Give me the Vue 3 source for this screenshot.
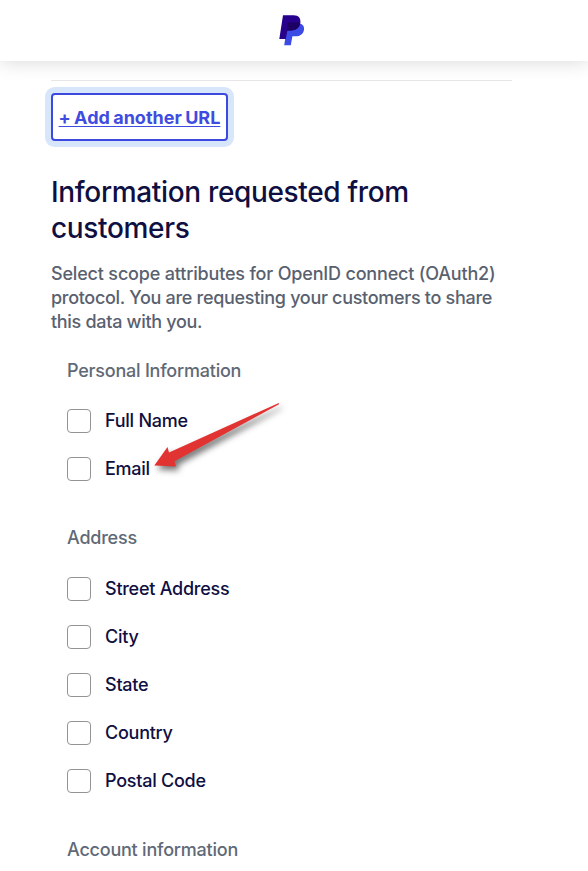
<template>
  <div class="page">
    <header class="top-bar">
      <svg class="logo" viewBox="0 0 26 31" role="img" aria-label="PayPal">
        <path d="M8.6 8.5H20.4C24 9 25.7 11.8 24.9 15.2C24 19.4 20.8 21.3 16.7 21.3H13.4L11.8 30.2H5.2Z" fill="#3b4be4" />
        <path d="M4 0.3H14.5C19.8 0.3 22.3 3.7 21.2 8.6C20.1 13.5 16.6 15.4 12 15.4H8.3L6.8 24H0.3Z" fill="#27008c" />
        <path d="M8.7 7.4H21.2C20.7 12.6 17 15.4 12 15.4H8.2L7.2 21Z" fill="#1c0064" />
      </svg>
    </header>

    <main class="content">
      <button class="add-url" type="button"><span>+ Add another URL</span></button>

      <h2 class="title">Information requested from<br />customers</h2>
      <p class="description">
        <span class="line-one">Select scope attributes for OpenID connect (OAuth2)</span><br />
        <span>protocol. You are requesting your customers to share</span><br />
        <span>this data with you.</span>
      </p>

      <section v-for="group in groups" :key="group.title" class="group">
        <h3 class="group-title">{{ group.title }}</h3>
        <label v-for="item in group.items" :key="item" class="option">
          <input v-model="selected" type="checkbox" class="checkbox" :value="item" />
          <span>{{ item }}</span>
        </label>
      </section>
    </main>

    <!-- arrow pointing at the email option -->
    <svg class="arrow" viewBox="0 0 150 90" aria-hidden="true">
      <path d="M14.3 75.5L27.5 57L29 62.5L138.8 13L139 14.2L34.5 71.2L36 76.5Z" fill="#e23333" />
    </svg>
  </div>
</template>

<script setup>
import { ref } from 'vue'

const selected = ref([])

const groups = [
  { title: 'Personal Information', items: ['Full Name', 'Email'] },
  { title: 'Address', items: ['Street Address', 'City', 'State', 'Country', 'Postal Code'] },
  { title: 'Account information', items: [] }
]
</script>

<style>
body {
  margin: 0;
  background: #fff;
}
</style>

<style scoped>
.page {
  position: relative;
  height: 871px;
  overflow: hidden;
  background: #fff;
  color: #0f0f42;
  font-family: Inter, "Liberation Sans", sans-serif;
  font-size: 18px;
  line-height: 24px;
}

.top-bar {
  display: flex;
  justify-content: center;
  box-sizing: border-box;
  height: 61px;
  padding: 15px 0 0 0;
  background: #fff;
  box-shadow: 0 0 20px rgba(0, 0, 0, 0.17);
}

.logo {
  width: 26px;
  height: 31px;
  margin-right: 4px;
}

.content {
  width: 461px;
  margin: 19px 0 0 51px;
  border-top: 1px solid #e6e6e6;
}

.add-url {
  display: flex;
  align-items: center;
  justify-content: center;
  box-sizing: border-box;
  width: 177px;
  height: 48px;
  margin: 12px 0 0;
  padding: 1px 0 0;
  border: 2px solid #3b49df;
  border-radius: 4px;
  background: #fff;
  box-shadow: 0 0 0 6px #d7e6fb;
  color: #3f4ce0;
  font-family: inherit;
  font-size: 18px;
  font-weight: 650;
  line-height: 24px;
  letter-spacing: 0.02px;
  word-spacing: -1px;
  white-space: nowrap;
}

.add-url span {
  text-decoration: underline;
  text-decoration-thickness: 1px;
  text-underline-offset: 2px;
  text-decoration-skip-ink: none;
}

.title {
  margin: 33px 0 0;
  font-size: 28px;
  font-weight: 500;
  line-height: 36px;
  letter-spacing: -0.34px;
  white-space: nowrap;
}

.description {
  margin: 16px 0 0;
  color: #59616f;
  font-weight: 450;
  letter-spacing: -0.3px;
  white-space: nowrap;
}

.line-one {
  letter-spacing: -0.18px;
}

.group {
  margin: 25px 0 0 16px;
}

.group + .group {
  margin-top: 33px;
}

.group-title {
  margin: 0 0 14px;
  color: #606976;
  font-size: 18px;
  font-weight: 450;
  line-height: 24px;
  letter-spacing: -0.22px;
}

.group + .group .group-title {
  margin-bottom: 15px;
}

.option {
  display: flex;
  align-items: center;
  gap: 14px;
  height: 48px;
  font-weight: 500;
  letter-spacing: -0.25px;
}

.checkbox {
  appearance: none;
  box-sizing: border-box;
  width: 24px;
  height: 24px;
  margin: 0;
  border: 1px solid #949494;
  border-radius: 4px;
  background: #fff;
}

.arrow {
  position: absolute;
  left: 140px;
  top: 390px;
  width: 150px;
  height: 90px;
  filter: drop-shadow(3px 4px 3px rgba(0, 0, 0, 0.55));
}
</style>
